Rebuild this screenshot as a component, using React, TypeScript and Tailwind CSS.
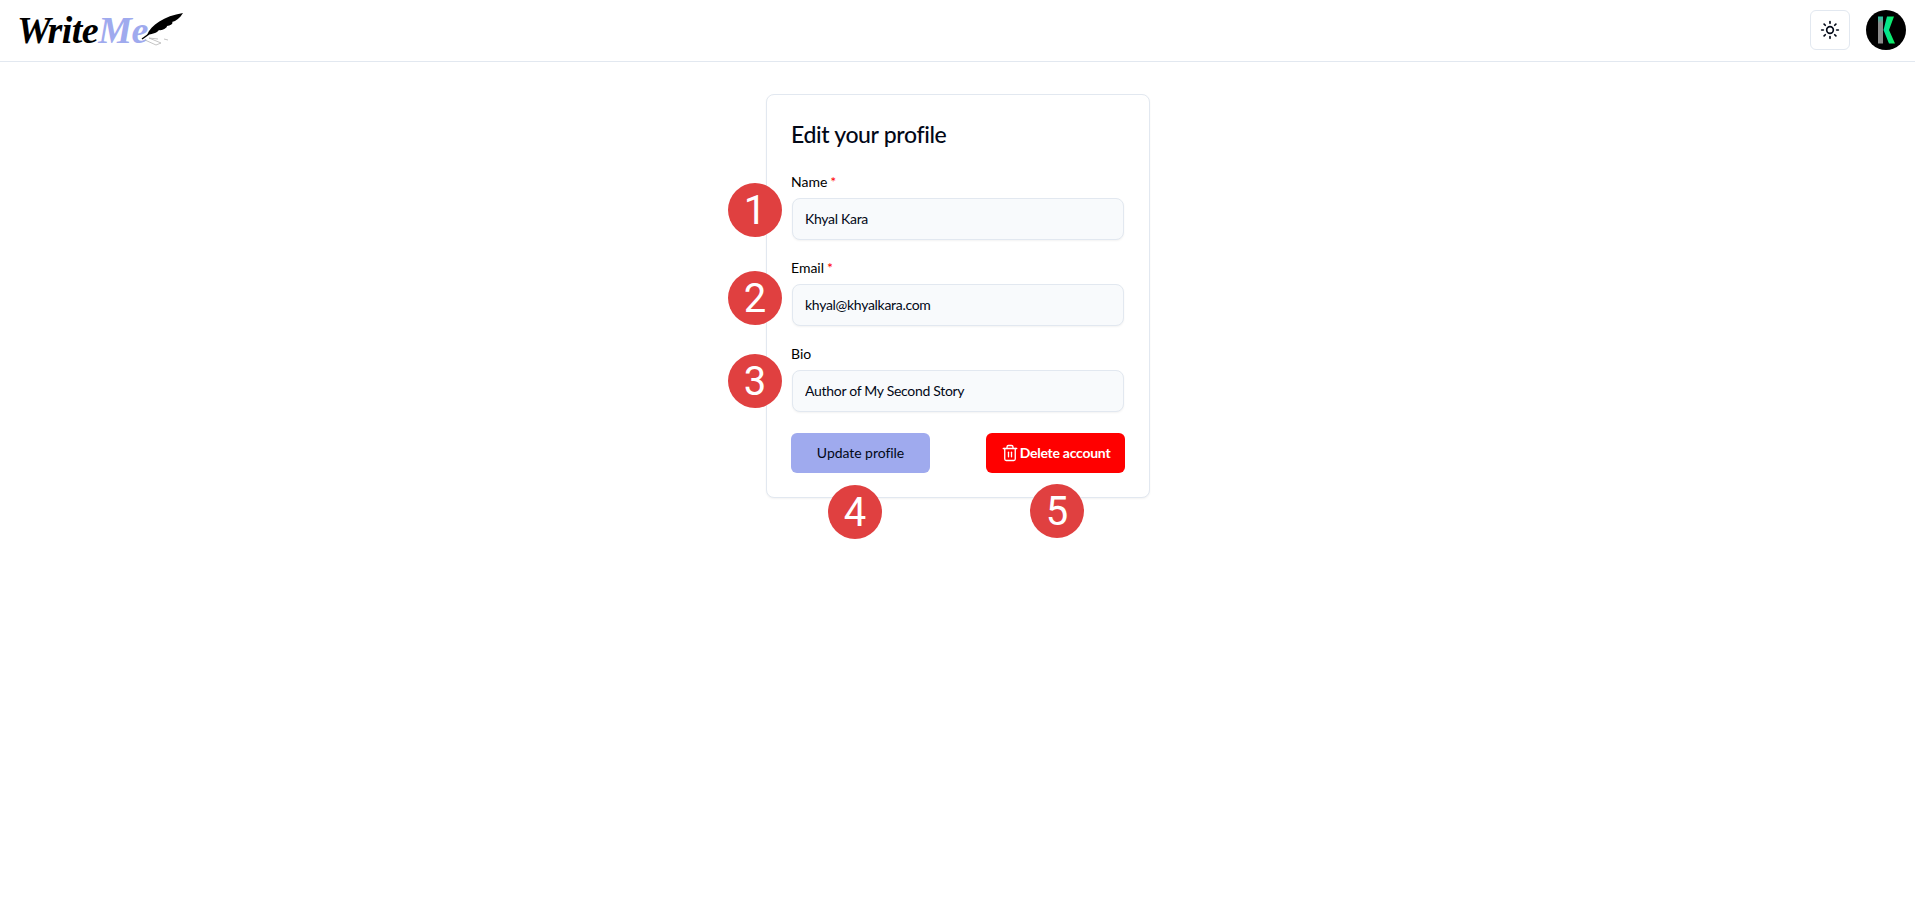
import { Sun, Trash2 } from 'lucide-react';

const fields = [
    { label: 'Name', value: 'Khyal Kara', required: true, badge: '1' },
    { label: 'Email', value: 'khyal@khyalkara.com', required: true, badge: '2' },
    { label: 'Bio', value: 'Author of My Second Story', required: false, badge: '3' },
];

function Badge({ n, className }: { n: string; className: string }) {
    return (
        <div
            className={`absolute flex h-[54px] w-[54px] items-center justify-center rounded-full bg-[#e04040] pt-[2px] font-['Roboto',sans-serif] text-[40px] leading-none font-normal text-white ${className}`}
        >
            {n}
        </div>
    );
}

function Logo() {
    return (
        <div className="flex items-start">
            <span className="mt-[11px] font-['Liberation_Serif',serif] text-[38px] leading-[38px] font-bold tracking-[-0.5px] text-black italic">
                Write<span className="text-[#9faaee]">Me</span>
            </span>
            <svg width="46" height="40" viewBox="0 0 46 40" className="-ml-[8px] mt-[10px]">
                <path d="M7 25 C11 15 24 6 43 3 C40 8 36 11 32 12 C34 13 30 16 27 16 C27 18 22 21 19 20 C17 23 12 24 7 25 Z" fill="#000" />
                <path d="M2 29 L9 24" stroke="#000" strokeWidth="1.5" fill="none" />
                <path d="M5 30 L16 35 L21 33 L9 28 L18 29 M24 29 L28 30" stroke="#b5b5b5" strokeWidth="0.8" fill="none" />
            </svg>
        </div>
    );
}

function Avatar() {
    return (
        <svg width="40" height="40" viewBox="0 0 40 40">
            <defs>
                <linearGradient id="kGreen" x1="0" y1="0" x2="1" y2="0">
                    <stop offset="0" stopColor="#00dfa0" />
                    <stop offset="1" stopColor="#13f05a" />
                </linearGradient>
                <linearGradient id="kGray" x1="0" y1="0" x2="0" y2="1">
                    <stop offset="0" stopColor="#20c8a0" />
                    <stop offset="0.25" stopColor="#8a8a8a" />
                    <stop offset="1" stopColor="#8a8a8a" />
                </linearGradient>
            </defs>
            <circle cx="20" cy="20" r="20" fill="#000" />
            <rect x="12" y="6.500" width="5" height="27" fill="url(#kGray)" />
            <path d="M21 6.500 L28 6.500 L23 20 L29 33.500 L23 33.500 L17.500 20 Z" fill="url(#kGreen)" />
        </svg>
    );
}

export default function App() {
    return (
        <div className="min-h-screen bg-white font-['Lato',sans-serif] text-[#020817]">
            <header className="flex h-[62px] items-start justify-between border-b border-[#e2e8f0] pr-[9px] pl-[17px]">
                <Logo />
                <div className="mt-[10px] flex items-center gap-4">
                    <button className="flex h-10 w-10 items-center justify-center rounded-md border border-[#e2e8f0] bg-white">
                        <Sun size={20} strokeWidth={2} />
                    </button>
                    <Avatar />
                </div>
            </header>

            <main className="flex justify-center pt-[32px]">
                <div className="relative ml-[1px] w-[384px] rounded-lg border border-[#e2e8f0] bg-white p-6 shadow-xs">
                    <h1 className="text-[23px] leading-[31px] font-medium tracking-[-0.35px]">Edit your profile</h1>
                    <div className="mt-[20px] space-y-4">
                        {fields.map((f) => (
                            <div key={f.label}>
                                <label className="block text-sm leading-[24px] font-normal text-black">
                                    {f.label}
                                    {f.required && <span className="ml-[3px] text-[#ff0000]">*</span>}
                                </label>
                                <div className="px-px pt-[4px]">
                                    <input
                                        readOnly
                                        value={f.value}
                                        className="h-[42px] w-full rounded-lg border border-[#e2e8f0] bg-[#f8fafc] px-3 pb-px text-sm tracking-[-0.3px] text-[#020817] shadow-xs outline-none"
                                    />
                                </div>
                            </div>
                        ))}
                    </div>
                    <div className="mt-[21px] flex justify-between">
                        <button className="h-10 w-[139px] rounded-md bg-[#9faaee] text-sm font-normal tracking-[-0.05px] text-[#020817]">
                            Update profile
                        </button>
                        <button className="flex h-10 w-[139px] items-center justify-center gap-px rounded-md bg-[#ff0000] text-sm font-bold tracking-[-0.25px] text-white">
                            <Trash2 size={18} strokeWidth={1.75} />
                            Delete account
                        </button>
                    </div>

                    {/* numbered callouts laid over the form */}
                    <Badge n="1" className="top-[88px] -left-[39px]" />
                    <Badge n="2" className="top-[176px] -left-[39px]" />
                    <Badge n="3" className="top-[259px] -left-[39px]" />
                    <Badge n="4" className="top-[390px] left-[61px]" />
                    <Badge n="5" className="top-[389px] left-[263px]" />
                </div>
            </main>
        </div>
    );
}
